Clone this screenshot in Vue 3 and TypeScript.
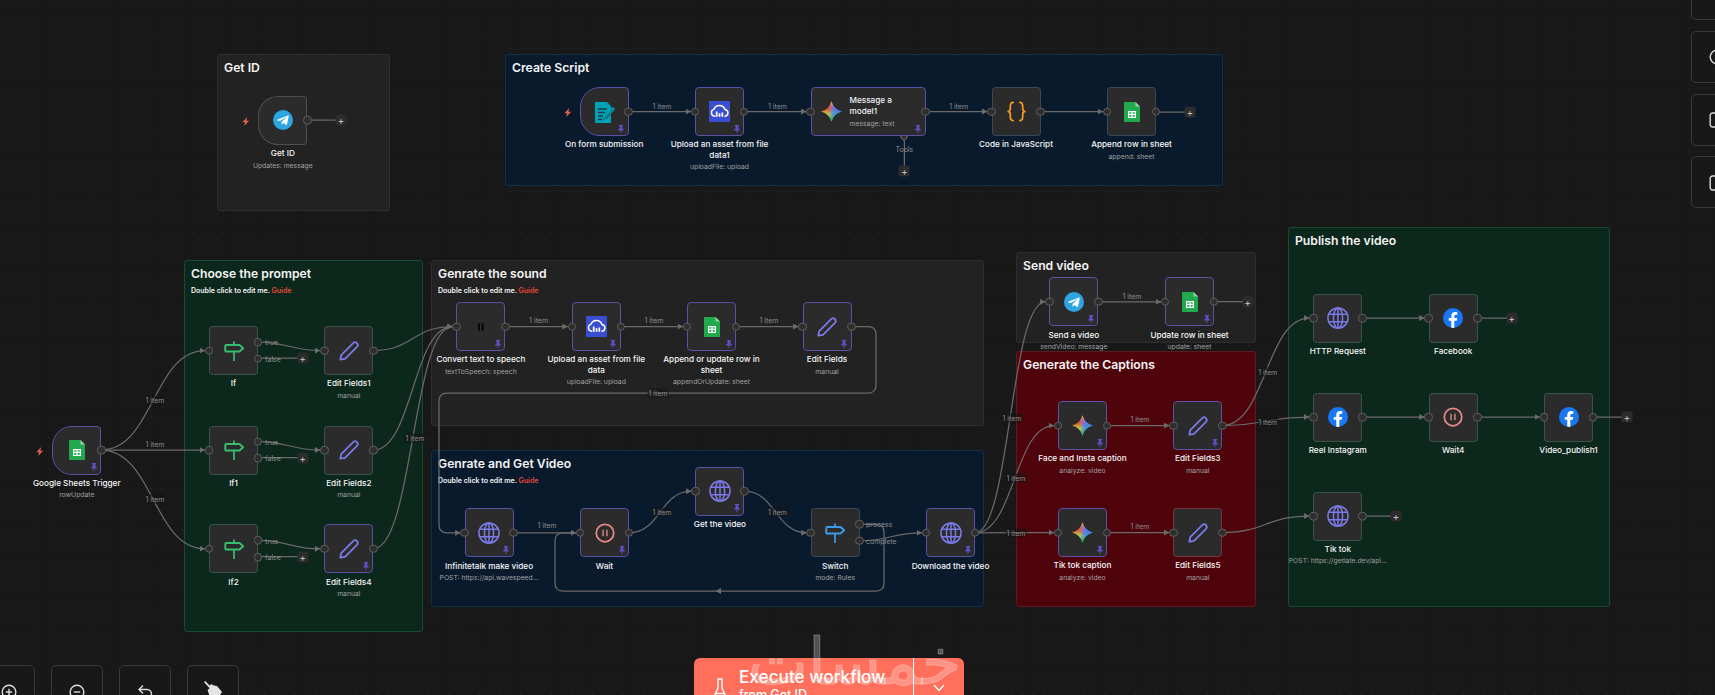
<script setup lang="ts">
interface Sticky { x: number; y: number; w: number; h: number; title: string; tone: string; guide?: boolean }
interface FlowNode {
  id: string; x: number; y: number; w?: number; icon: string; size?: number; label: string; sub?: string;
  pinned?: boolean; trigger?: boolean; noIn?: boolean; outs?: number[]; wide?: boolean;
}
interface Edge { from: string; to: string; out?: number }
interface Tag { x: number; y: number; onLine?: boolean }
interface Plus { x: number; y: number; fromX: number }

const stickies: Sticky[] = [
  { x: 217, y: 54, w: 173, h: 157, title: 'Get ID', tone: 'grey' },
  { x: 505, y: 54, w: 718, h: 132, title: 'Create Script', tone: 'blue' },
  { x: 184, y: 260, w: 239, h: 372, title: 'Choose the prompet', tone: 'green', guide: true },
  { x: 431, y: 260, w: 553, h: 166, title: 'Genrate the sound', tone: 'grey', guide: true },
  { x: 431, y: 450, w: 553, h: 157, title: 'Genrate and Get Video', tone: 'blue', guide: true },
  { x: 1016, y: 252, w: 240, h: 91, title: 'Send video', tone: 'grey' },
  { x: 1016, y: 351, w: 240, h: 256, title: 'Generate the Captions', tone: 'red' },
  { x: 1288, y: 227, w: 322, h: 380, title: 'Publish the video', tone: 'green' },
]

const nodes: FlowNode[] = [
  { id: 'getid', x: 258.3, y: 95.7, icon: 'telegram', label: 'Get ID', sub: 'Updates: message', trigger: true, noIn: true },
  { id: 'form', x: 579.7, y: 87, icon: 'form', size: 24, label: 'On form submission', trigger: true, noIn: true, pinned: true },
  { id: 'up1', x: 695, y: 87, icon: 'asset', size: 21, label: 'Upload an asset from file data1', sub: 'uploadFile: upload', pinned: true },
  { id: 'msg', x: 810.5, y: 87, w: 115, icon: 'gemini', size: 23, label: 'Message a model1', sub: 'message: text', pinned: true, wide: true },
  { id: 'code', x: 991.5, y: 87, icon: 'code', size: 23, label: 'Code in JavaScript' },
  { id: 'app1', x: 1107, y: 87, icon: 'sheets', size: 24, label: 'Append row in sheet', sub: 'append: sheet' },

  { id: 'sheets', x: 52.3, y: 425.5, icon: 'sheets', size: 24, label: 'Google Sheets Trigger', sub: 'rowUpdate', trigger: true, noIn: true, pinned: true },
  { id: 'if0', x: 209, y: 326, icon: 'sign', size: 22, label: 'If', outs: [16, 32.7] },
  { id: 'if1', x: 209, y: 425.5, icon: 'sign', size: 22, label: 'If1', outs: [16, 32.7] },
  { id: 'if2', x: 209, y: 524.3, icon: 'sign', size: 22, label: 'If2', outs: [16, 32.7] },
  { id: 'ef1', x: 324.3, y: 326, icon: 'pencil', size: 22, label: 'Edit Fields1', sub: 'manual' },
  { id: 'ef2', x: 324.3, y: 425.5, icon: 'pencil', size: 22, label: 'Edit Fields2', sub: 'manual' },
  { id: 'ef4', x: 324.3, y: 524.3, icon: 'pencil', size: 22, label: 'Edit Fields4', sub: 'manual', pinned: true },

  { id: 'tts', x: 456.4, y: 302, icon: 'pause', size: 8, label: 'Convert text to speech', sub: 'textToSpeech: speech', pinned: true },
  { id: 'up2', x: 571.8, y: 302, icon: 'asset', size: 21, label: 'Upload an asset from file data', sub: 'uploadFile: upload', pinned: true },
  { id: 'app2', x: 687, y: 302, icon: 'sheets', size: 24, label: 'Append or update row in sheet', sub: 'appendOrUpdate: sheet', pinned: true },
  { id: 'ef', x: 802.5, y: 302, icon: 'pencil', size: 22, label: 'Edit Fields', sub: 'manual', pinned: true },

  { id: 'inf', x: 464.6, y: 508.3, icon: 'globe', size: 22, label: 'Infinitetalk make video', sub: 'POST: https://api.wavespeed...', pinned: true },
  { id: 'wait', x: 580, y: 508.3, icon: 'wait', label: 'Wait', pinned: true },
  { id: 'get', x: 695.4, y: 466.7, icon: 'globe', size: 22, label: 'Get the video', pinned: true },
  { id: 'sw', x: 810.7, y: 508.3, icon: 'switch', size: 22, label: 'Switch', sub: 'mode: Rules', outs: [16, 32.4] },
  { id: 'dl', x: 926, y: 508.3, icon: 'globe', size: 22, label: 'Download the video', pinned: true },

  { id: 'send', x: 1049.3, y: 277.3, icon: 'telegram', label: 'Send a video', sub: 'sendVideo: message', pinned: true },
  { id: 'upd', x: 1165, y: 277.3, icon: 'sheets', size: 24, label: 'Update row in sheet', sub: 'update: sheet', pinned: true },
  { id: 'face', x: 1058, y: 401, icon: 'gemini', size: 23, label: 'Face and Insta caption', sub: 'analyze: video', pinned: true },
  { id: 'ef3', x: 1173.3, y: 401, icon: 'pencil', size: 22, label: 'Edit Fields3', sub: 'manual', pinned: true },
  { id: 'tik', x: 1058, y: 508, icon: 'gemini', size: 23, label: 'Tik tok caption', sub: 'analyze: video', pinned: true },
  { id: 'ef5', x: 1173.3, y: 508, icon: 'pencil', size: 22, label: 'Edit Fields5', sub: 'manual' },

  { id: 'http', x: 1313.3, y: 293.5, icon: 'globe', size: 22, label: 'HTTP Request' },
  { id: 'fb', x: 1428.7, y: 293.5, icon: 'facebook', label: 'Facebook' },
  { id: 'reel', x: 1313.3, y: 392.5, icon: 'facebook', label: 'Reel Instagram' },
  { id: 'w4', x: 1428.7, y: 392.5, icon: 'wait', label: 'Wait4' },
  { id: 'vp', x: 1544, y: 392.5, icon: 'facebook', label: 'Video_publish1' },
  { id: 'tt', x: 1313.3, y: 491.5, icon: 'globe', size: 22, label: 'Tik tok', sub: 'POST: https://getlate.dev/api...' },
]

const edges: Edge[] = [
  { from: 'form', to: 'up1' }, { from: 'up1', to: 'msg' }, { from: 'msg', to: 'code' }, { from: 'code', to: 'app1' },
  { from: 'sheets', to: 'if0' }, { from: 'sheets', to: 'if1' }, { from: 'sheets', to: 'if2' },
  { from: 'if0', to: 'ef1', out: 16 }, { from: 'if1', to: 'ef2', out: 16 }, { from: 'if2', to: 'ef4', out: 16 },
  { from: 'ef1', to: 'tts' }, { from: 'ef2', to: 'tts' }, { from: 'ef4', to: 'tts' },
  { from: 'tts', to: 'up2' }, { from: 'up2', to: 'app2' }, { from: 'app2', to: 'ef' },
  { from: 'inf', to: 'wait' }, { from: 'wait', to: 'get' }, { from: 'get', to: 'sw' }, { from: 'sw', to: 'dl', out: 32.4 },
  { from: 'dl', to: 'send' }, { from: 'dl', to: 'face' }, { from: 'dl', to: 'tik' },
  { from: 'send', to: 'upd' }, { from: 'face', to: 'ef3' }, { from: 'tik', to: 'ef5' },
  { from: 'ef3', to: 'http' }, { from: 'ef3', to: 'reel' }, { from: 'ef5', to: 'tt' },
  { from: 'http', to: 'fb' }, { from: 'reel', to: 'w4' }, { from: 'w4', to: 'vp' },
]

const H = 49
const byId = new Map(nodes.map((n) => [n.id, n]))
const widthOf = (n: FlowNode) => n.w ?? H

const edgePaths = edges.map((e) => {
  const a = byId.get(e.from)!
  const b = byId.get(e.to)!
  const x1 = a.x + widthOf(a)
  const y1 = a.y + (e.out ?? H / 2)
  const x2 = b.x - 4
  const y2 = b.y + H / 2
  const c = (x2 - x1) / 2
  return `M${x1} ${y1} C${x1 + c} ${y1} ${x2 - c} ${y2} ${x2} ${y2}`
})

const routed = [
  'M851.5 326.5 H868 Q876 326.5 876 334.5 V385 Q876 393 868 393 H447 Q439 393 439 401 V524.7 Q439 532.8 447 532.8 H460.6',
  'M860 524.3 H876 Q884 524.3 884 532.3 V583 Q884 591 876 591 H563 Q555 591 555 583 V540.8 Q555 532.8 563 532.8 H576',
]

const pluses: Plus[] = [
  { x: 341, y: 120, fromX: 307 },
  { x: 1190, y: 112, fromX: 1156 },
  { x: 302.7, y: 358, fromX: 258 },
  { x: 302.7, y: 457.5, fromX: 258 },
  { x: 302.7, y: 556.7, fromX: 258 },
  { x: 1247.7, y: 301.7, fromX: 1214 },
  { x: 1511.7, y: 318, fromX: 1478 },
  { x: 1627, y: 417, fromX: 1593 },
  { x: 1396, y: 516, fromX: 1362 },
]

const tags: Tag[] = [
  { x: 662, y: 106 }, { x: 777.5, y: 106 }, { x: 958.7, y: 106 },
  { x: 155, y: 400, onLine: true }, { x: 155, y: 443.7 }, { x: 155, y: 499.3, onLine: true }, { x: 415, y: 437.7, onLine: true },
  { x: 538.6, y: 319.7 }, { x: 654, y: 319.7 }, { x: 769, y: 319.7 }, { x: 658, y: 393, onLine: true },
  { x: 547, y: 525.3 }, { x: 662, y: 511.7, onLine: true }, { x: 777.5, y: 511.7, onLine: true },
  { x: 1132, y: 295.7 }, { x: 1140, y: 418.7 }, { x: 1140, y: 525.7 },
  { x: 1012, y: 417.7, onLine: true }, { x: 1016, y: 478, onLine: true }, { x: 1016, y: 532.7, onLine: true },
  { x: 1267.7, y: 371.7, onLine: true }, { x: 1267.7, y: 421.7, onLine: true },
]

const branches = [
  { x: 265, y: 341.8, t: 'true' }, { x: 265, y: 359, t: 'false' },
  { x: 265, y: 441.7, t: 'true' }, { x: 265, y: 458.3, t: 'false' },
  { x: 265, y: 540.7, t: 'true' }, { x: 265, y: 557, t: 'false' },
  { x: 866, y: 524.3, t: 'process' }, { x: 866, y: 540.7, t: 'complete' },
]

const pos = (x: number, y: number) => ({ left: `${x}px`, top: `${y}px` })
const box = (x: number, y: number, w: number, h: number) => ({ left: `${x}px`, top: `${y}px`, width: `${w}px`, height: `${h}px` })
const iconSize = (s?: number) => ({ width: `${s ?? 20}px`, height: `${s ?? 20}px` })
</script>

<template>
  <div class="canvas">
    <svg class="defs" width="0" height="0" aria-hidden="true">
      <defs>
        <filter id="soft" x="-30%" y="-30%" width="160%" height="160%"><feGaussianBlur stdDeviation="1.8" /></filter>
        <clipPath id="starclip"><path d="M12 1 Q14.2 9.8 23 12 Q14.2 14.2 12 23 Q9.8 14.2 1 12 Q9.8 9.8 12 1Z" /></clipPath>
        <marker id="arrow" markerUnits="userSpaceOnUse" markerWidth="6" markerHeight="6" refX="5.5" refY="3" orient="auto">
          <path d="M0 0 L5.5 3 L0 6Z" fill="#6c6c6c" />
        </marker>
        <symbol id="i-telegram" viewBox="0 0 24 24">
          <circle cx="12" cy="12" r="12" fill="#2ca5e0" />
          <path d="M5 11.8 L18 6.6 C18.7 6.4 19.1 6.7 18.9 7.5 L16.8 17.5 C16.6 18.2 16.2 18.3 15.6 18 L12.5 15.7 L10.9 17.2 C10.7 17.4 10.5 17.5 10.2 17.5 L10.4 14 L16 8.9 C16.2 8.7 16 8.5 15.7 8.7 L8.8 13 L5.4 12.9 C4.7 12.8 4.7 12.2 5 11.8Z" fill="#fff" />
        </symbol>
        <symbol id="i-sheets" viewBox="0 0 24 24">
          <path d="M6 2 H15.5 L20 6.5 V21 A1 1 0 0 1 19 22 H5 A1 1 0 0 1 4 21 V3 A1 1 0 0 1 5 2Z" fill="#23a94d" />
          <path d="M15.5 2 V6.5 H20Z" fill="#8fd3a6" />
          <path d="M8 11 H16 V18 H8Z M9.2 12.2 V13.8 H11.4 V12.2Z M12.6 12.2 V13.8 H14.8 V12.2Z M9.2 15 V16.8 H11.4 V15Z M12.6 15 V16.8 H14.8 V15Z" fill="#fff" fill-rule="evenodd" />
        </symbol>
        <symbol id="i-form" viewBox="0 0 24 24">
          <path d="M3 2 H15 L19 6 V23 H3Z" fill="#00a3b6" />
          <path d="M6 9 H15 M6 12.5 H13 M6 16 H11 M6 19.5 H10" stroke="#243a40" stroke-width="1.3" />
          <path d="M12 18.5 L22 8" stroke="#00a3b6" stroke-width="3.4" />
          <path d="M11 20 L21.5 9 M14 19 L23 10" stroke="#243a40" stroke-width="0.8" />
        </symbol>
        <symbol id="i-asset" viewBox="0 0 24 24">
          <rect width="24" height="24" fill="#3a4ed2" />
          <path d="M6.5 17.5 A4.2 4.2 0 0 1 5.8 9.3 A6.6 6.6 0 0 1 18.2 9.6 A4 4 0 0 1 18.3 17.5" fill="none" stroke="#fff" stroke-width="1.7" stroke-linecap="round" />
          <path d="M8.8 12 V18 M12 14 V18 M15.2 13 V18" stroke="#fff" stroke-width="2" />
        </symbol>
        <symbol id="i-gemini" viewBox="0 0 24 24">
          <g clip-path="url(#starclip)">
            <g filter="url(#soft)">
              <rect x="0" y="0" width="12" height="12" fill="#e8542f" />
              <rect x="12" y="0" width="12" height="12" fill="#5b7cf0" />
              <rect x="0" y="12" width="12" height="12" fill="#c2c34a" />
              <rect x="12" y="12" width="12" height="12" fill="#3f9ae0" />
              <rect x="9" y="17" width="6" height="7" fill="#2fae6e" />
              <rect x="9" y="0" width="6" height="5" fill="#e6a33a" />
            </g>
          </g>
        </symbol>
        <symbol id="i-code" viewBox="0 0 24 24">
          <path d="M8.5 2.5 C5.5 2.5 5.5 5 5.5 7 V9.5 C5.5 11 4.5 12 2.5 12 C4.5 12 5.5 13 5.5 14.5 V17 C5.5 19 5.5 21.5 8.5 21.5" fill="none" stroke="#f59a23" stroke-width="1.8" stroke-linecap="round" />
          <path d="M15.5 2.5 C18.5 2.5 18.5 5 18.5 7 V9.5 C18.5 11 19.5 12 21.5 12 C19.5 12 18.5 13 18.5 14.5 V17 C18.5 19 18.5 21.5 15.5 21.5" fill="none" stroke="#f59a23" stroke-width="1.8" stroke-linecap="round" />
        </symbol>
        <symbol id="i-sign" viewBox="0 0 24 24">
          <path d="M12 1.5 V5 M12 13 V23" stroke="#37bd6e" stroke-width="1.9" />
          <path d="M3.5 5.5 H18 L22 9 L18 12.5 H3.5 Q2.5 12.5 2.5 11.5 V6.5 Q2.5 5.5 3.5 5.5Z" fill="none" stroke="#37bd6e" stroke-width="2.1" stroke-linejoin="round" />
        </symbol>
        <symbol id="i-switch" viewBox="0 0 24 24">
          <path d="M12 1.5 V5 M12 13 V23" stroke="#3b9bea" stroke-width="1.9" />
          <path d="M3.5 5.5 H18 L22 9 L18 12.5 H3.5 Q2.5 12.5 2.5 11.5 V6.5 Q2.5 5.5 3.5 5.5Z" fill="none" stroke="#3b9bea" stroke-width="2.1" stroke-linejoin="round" />
        </symbol>
        <symbol id="i-pencil" viewBox="0 0 24 24">
          <path d="M2.5 21.5 L3.5 16.4 L16.6 3.3 A2.9 2.9 0 0 1 20.7 7.4 L7.6 20.5Z" fill="none" stroke="#7c7ae8" stroke-width="1.9" stroke-linejoin="round" />
        </symbol>
        <symbol id="i-globe" viewBox="0 0 24 24">
          <g fill="none" stroke="#7c7ae8" stroke-width="1.6">
            <circle cx="12" cy="12" r="11" />
            <ellipse cx="12" cy="12" rx="5" ry="11" />
            <path d="M12 1 V23 M2.2 8 H21.8 M2.2 16 H21.8" />
          </g>
        </symbol>
        <symbol id="i-wait" viewBox="0 0 24 24">
          <circle cx="12" cy="12" r="10.5" fill="none" stroke="#e78a8a" stroke-width="2.1" />
          <path d="M9.7 8 V16 M14.3 8 V16" stroke="#c27a7a" stroke-width="2" />
        </symbol>
        <symbol id="i-pause" viewBox="0 0 24 24">
          <path d="M6 1 V23 M17 1 V23" stroke="#000" stroke-width="5" />
        </symbol>
        <symbol id="i-facebook" viewBox="0 0 24 24">
          <clipPath id="fbclip"><circle cx="12" cy="12" r="12" /></clipPath>
          <circle cx="12" cy="12" r="12" fill="#1877f2" />
          <path clip-path="url(#fbclip)" d="M13.6 24 V15.4 H16.6 L17.1 12 H13.6 V9.9 C13.6 8.9 14.1 8 15.6 8 H17.2 V5 C17.2 5 15.8 4.7 14.5 4.7 C11.7 4.7 9.9 6.4 9.9 9.5 V12 H6.9 V15.4 H9.9 V24Z" fill="#fff" />
        </symbol>
        <symbol id="i-pin" viewBox="0 0 12 12">
          <path d="M2.8 0 H9.2 V1.2 L8 2.2 V5 L10.2 7 V8.2 H6.7 V12 H5.3 V8.2 H1.8 V7 L4 5 V2.2 L2.8 1.2Z" fill="#5d50c6" />
        </symbol>
        <symbol id="i-bolt" viewBox="0 0 10 12">
          <path d="M7 0 L0.5 7 H4 L2.8 12 L9.5 5 H5.8Z" fill="#e4604a" />
        </symbol>
      </defs>
    </svg>

    <section
      v-for="s in stickies"
      :key="s.title"
      class="sticky"
      :class="s.tone"
      :style="box(s.x, s.y, s.w, s.h)"
    >
      <h2>{{ s.title }}</h2>
      <p v-if="s.guide">Double click to edit me. <a>Guide</a></p>
    </section>

    <svg class="wires" width="1715" height="695">
      <path v-for="(d, i) in edgePaths" :key="'e' + i" :d="d" marker-end="url(#arrow)" />
      <path v-for="(d, i) in routed" :key="'r' + i" :d="d" marker-end="url(#arrow)" />
      <path d="M721 588 L715.5 591 L721 594Z" class="tip" />
      <path v-for="(p, i) in pluses" :key="'p' + i" :d="`M${p.fromX} ${p.y} H${p.x}`" />
      <path d="M904.4 137 V171" />
    </svg>

    <span
      v-for="(t, i) in tags"
      :key="'t' + i"
      class="tag"
      :class="{ online: t.onLine }"
      :style="pos(t.x, t.y)"
    >1 item</span>

    <span v-for="(b, i) in branches" :key="'b' + i" class="branch" :style="pos(b.x, b.y)">{{ b.t }}</span>

    <button v-for="(p, i) in pluses" :key="'add' + i" class="plus" :style="pos(p.x, p.y)">+</button>
    <button class="plus" :style="pos(904.4, 171.3)">+</button>
    <span class="diamond" :style="pos(904.4, 136.7)"></span>
    <span class="tools" :style="pos(904.4, 148.7)">Tools</span>

    <article v-for="n in nodes" :key="n.id" class="node" :style="pos(n.x, n.y)">
      <div class="body" :class="{ trigger: n.trigger, pinned: n.pinned, wide: n.wide }" :style="n.w ? { width: n.w + 'px' } : undefined">
        <svg class="icon" :style="iconSize(n.size)"><use :href="`#i-${n.icon}`" /></svg>
        <div v-if="n.wide" class="inner">
          <div class="inner-label">{{ n.label }}</div>
          <div class="inner-sub">{{ n.sub }}</div>
        </div>
        <svg v-if="n.pinned" class="pin"><use href="#i-pin" /></svg>
        <svg v-if="n.trigger" class="bolt"><use href="#i-bolt" /></svg>
        <i v-if="!n.noIn" class="port in"></i>
        <i
          v-for="o in n.outs ?? [24.5]"
          :key="o"
          class="port out"
          :style="{ top: o + 'px' }"
        ></i>
      </div>
      <template v-if="!n.wide">
        <div class="label">{{ n.label }}</div>
        <div v-if="n.sub" class="sub">{{ n.sub }}</div>
      </template>
    </article>

    <div class="zoombar">
      <button class="tool">
        <svg viewBox="0 0 16 16"><circle cx="8" cy="8" r="6.8" /><path d="M8 4.8 V11.2 M4.8 8 H11.2" /></svg>
      </button>
      <button class="tool">
        <svg viewBox="0 0 16 16"><circle cx="8" cy="8" r="6.8" /><path d="M4.8 8 H11.2" /></svg>
      </button>
      <button class="tool">
        <svg viewBox="0 0 16 16"><path d="M6 1.5 L2 5.5 L6 9.5 M2 5.5 H10 A4.5 4.5 0 0 1 10 14.5 H7" /></svg>
      </button>
      <button class="tool broom">
        <svg viewBox="0 0 18 18"><path class="solid" d="M0 1 L1.2 0 L5.6 4.4 L7.6 2.9 L9 4.2 L13 5 L18 11 L13.5 18 H6.5 L3.6 9 L5.6 7.2 L4 5.6Z" /></svg>
      </button>
    </div>

    <div class="sidebar">
      <button class="side"></button>
      <button class="side"><svg viewBox="0 0 16 16"><circle cx="8" cy="8" r="6.8" /></svg></button>
      <button class="side"><svg viewBox="0 0 16 16"><rect x="1.2" y="1" width="13.6" height="14" rx="2.4" /></svg></button>
      <button class="side"><svg viewBox="0 0 16 16"><rect x="1.2" y="1" width="13.6" height="14" rx="2.4" /></svg></button>
    </div>

    <div class="execute">
      <button class="run">
        <svg viewBox="0 0 16 24"><path d="M5.5 1 H10.5 M6 1 V10 L1.5 20 A1.6 1.6 0 0 0 3 22.5 H13 A1.6 1.6 0 0 0 14.5 20 L10 10 V1 M3.8 15.5 H12.2" /></svg>
        <span class="run-text"><b>Execute workflow</b><small>from Get ID</small></span>
      </button>
      <button class="more">
        <svg viewBox="0 0 12 8"><path d="M1 1 L6 6.5 L11 1" /></svg>
      </button>
    </div>

    <div class="mark" dir="rtl" lang="ar">خمسات</div>
  </div>
</template>

<style>
html, body { margin: 0; background: #181818; overflow: hidden; }
</style>

<style scoped>
.canvas {
  position: relative;
  width: 1715px;
  height: 695px;
  overflow: hidden;
  background-color: #181818;
  background-image: radial-gradient(circle, #343434 0.6px, transparent 0.8px);
  background-size: 10.25px 10.25px;
  background-position: 3px 2px;
  font-family: Inter, "Liberation Sans", sans-serif;
}
.defs { position: absolute; }

.sticky {
  position: absolute;
  box-sizing: border-box;
  margin: 0;
  padding: 6px 6px;
  border: 1px solid;
  border-radius: 3px;
  color: #f4f4f4;
}
.sticky h2 { margin: 0; font-size: 12.2px; line-height: 14px; font-weight: 600; }
.sticky p { margin: 5px 0 0; font-size: 7px; line-height: 9px; font-weight: 600; }
.sticky a { color: #e8493a; }
.grey { background: #222222; border-color: #2e2e2e; }
.blue { background: #091a2d; border-color: #10304a; }
.green { background: #0c271b; border-color: #174a31; }
.red { background: #4f040c; border-color: #5e1a20; }

.wires { position: absolute; left: 0; top: 0; pointer-events: none; }
.wires path { fill: none; stroke: #6a6a6a; stroke-width: 1.25; }
.wires path.tip { fill: #6c6c6c; stroke: none; }

.tag, .branch, .tools {
  position: absolute;
  font-size: 7px;
  line-height: 9px;
  color: #8e8e8e;
  white-space: nowrap;
}
.tag { transform: translate(-50%, -50%); padding: 0 1px; }
.tag.online { background: rgba(22, 22, 22, 0.6); }
.branch { transform: translateY(-50%); }
.tools { transform: translate(-50%, -50%); }

.plus {
  position: absolute;
  width: 11px;
  height: 11px;
  padding: 0;
  border: 0;
  border-radius: 2.5px;
  background: #2c2c2c;
  color: #bdbdbd;
  font: 500 9.5px/11px Inter, sans-serif;
  text-align: center;
  transform: translate(-50%, -50%);
}
.diamond {
  position: absolute;
  width: 6px;
  height: 6px;
  box-sizing: border-box;
  background: #2c2c2c;
  border: 1px solid #666;
  transform: translate(-50%, -50%) rotate(45deg);
}

.node {
  position: absolute;
  width: 49px;
  display: flex;
  flex-direction: column;
  align-items: center;
}
.body {
  position: relative;
  flex: none;
  box-sizing: border-box;
  width: 49px;
  height: 49px;
  display: flex;
  align-items: center;
  justify-content: center;
  background: #2b2b2b;
  background-clip: padding-box;
  border: 1px solid rgba(255, 255, 255, 0.2);
  border-radius: 4px;
}
.body.pinned { border-color: #5b52a8; }
.body.trigger { border-radius: 20px 4px 4px 20px; }
.body.wide {
  align-self: flex-start;
  justify-content: flex-start;
  gap: 7px;
  padding-left: 8px;
}
.icon { display: block; flex: none; }
.inner { width: 62px; color: #f2f2f2; }
.inner-label { font-size: 8.2px; line-height: 10.6px; font-weight: 500; width: 48px; }
.inner-sub { margin-top: 3px; font-size: 6.8px; line-height: 9px; color: #a0a0a0; }
.pin { position: absolute; right: 2.5px; bottom: 2.5px; width: 8px; height: 8px; }
.bolt { position: absolute; left: -17px; top: 20px; width: 7.5px; height: 9px; }
.port {
  position: absolute;
  box-sizing: border-box;
  width: 8.6px;
  height: 8.6px;
  border: 1px solid #5e5e5e;
  border-radius: 50%;
  background: #2e2e2e;
  transform: translateY(-50%);
}
.port.in { left: -5.3px; top: 23.5px; }
.port.out { right: -5.3px; margin-top: -1px; }
.label {
  flex: none;
  width: 102px;
  margin-top: 3.3px;
  font-size: 8.2px;
  line-height: 10.6px;
  font-weight: 500;
  color: #f6f6f6;
  text-align: center;
}
.sub {
  flex: none;
  margin-top: 2px;
  font-size: 6.8px;
  line-height: 9px;
  color: #a0a0a0;
  white-space: nowrap;
}

.zoombar {
  position: absolute;
  left: -17px;
  top: 665px;
  display: flex;
  gap: 16px;
}
.tool, .side {
  flex: none;
  width: 52px;
  height: 52px;
  padding: 0;
  box-sizing: border-box;
  background: #181818;
  border: 1px solid #3a3a3a;
  border-radius: 5px;
  position: relative;
}
.tool svg, .side svg {
  position: absolute;
  left: 17px;
  top: 17.5px;
  width: 16px;
  height: 16px;
  fill: none;
  stroke: #dcdcdc;
  stroke-width: 1.4;
}
.tool.broom svg { top: 15px; width: 18px; height: 18px; left: 15.5px; }
.tool svg .solid { fill: #e4e4e4; stroke: none; }
.sidebar {
  position: absolute;
  left: 1691px;
  top: -32px;
  display: flex;
  flex-direction: column;
  gap: 10.8px;
}

.execute {
  position: absolute;
  left: 694px;
  top: 658px;
  width: 270px;
  height: 62px;
  display: flex;
  background: #ff6f5c;
  border-radius: 6px;
  color: #fff;
}
.run, .more {
  padding: 0;
  border: 0;
  background: none;
  color: inherit;
  font-family: inherit;
}
.run {
  flex: 1;
  display: flex;
  align-items: flex-start;
  gap: 11px;
  padding: 8px 0 0 18px;
  border-right: 1px solid #ffffff;
  text-align: left;
}
.run svg {
  flex: none;
  width: 16px;
  height: 24px;
  margin-top: 12px;
  fill: none;
  stroke: #fff;
  stroke-width: 1.4;
}
.run-text { display: flex; flex-direction: column; }
.run-text b { font-size: 17.2px; line-height: 21px; font-weight: 500; }
.run-text small { font-size: 12.5px; line-height: 16px; font-weight: 500; }
.more { width: 50px; display: flex; justify-content: center; align-items: flex-start; padding-top: 26px; }
.more svg { width: 12px; height: 8px; fill: none; stroke: #fff; stroke-width: 1.4; }

.mark {
  position: absolute;
  left: 742px;
  top: 617px;
  width: 225px;
  font-family: "DejaVu Sans", sans-serif;
  font-weight: 400;
  font-size: 64px;
  line-height: 90px;
  text-align: center;
  color: rgba(255, 255, 255, 0.25);
  -webkit-text-stroke: 1px rgba(255, 255, 255, 0.25);
  white-space: nowrap;
  pointer-events: none;
}
</style>
